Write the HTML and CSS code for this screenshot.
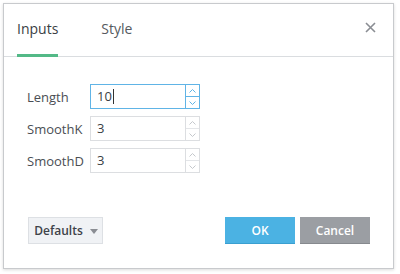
FILE: index.html
```html
<!DOCTYPE html>
<html lang="en">
<head>
    <meta charset="UTF-8">
    <title>Stoch - Inputs</title>
    <link rel="stylesheet" href="styles.css">
</head>
<body>
    <div class="dialog">
        <!-- tabs header -->
        <div class="dialog-header">
            <div class="tabs">
                <div class="tab active">Inputs</div>
                <div class="tab">Style</div>
            </div>
            <div class="close">
                <svg width="11" height="11" viewBox="0 0 11 11">
                    <path d="M1 1 L10 10 M10 1 L1 10" stroke="#8a8d93" stroke-width="1.6" fill="none"/>
                </svg>
            </div>
        </div>

        <!-- inputs -->
        <div class="dialog-body">
            <div class="row">
                <label class="row-label">Length</label>
                <div class="spin-input focused">
                    <div class="value">10<span class="caret"></span></div>
                    <div class="spinner">
                        <div class="spin-btn"><svg width="7" height="4" viewBox="0 0 7 4"><path d="M0.5 3.5 L3.5 0.5 L6.5 3.5" stroke="currentColor" fill="none"/></svg></div>
                        <div class="spin-btn"><svg width="7" height="4" viewBox="0 0 7 4"><path d="M0.5 0.5 L3.5 3.5 L6.5 0.5" stroke="currentColor" fill="none"/></svg></div>
                    </div>
                </div>
            </div>
            <div class="row">
                <label class="row-label">SmoothK</label>
                <div class="spin-input">
                    <div class="value">3</div>
                    <div class="spinner">
                        <div class="spin-btn"><svg width="7" height="4" viewBox="0 0 7 4"><path d="M0.5 3.5 L3.5 0.5 L6.5 3.5" stroke="currentColor" fill="none"/></svg></div>
                        <div class="spin-btn"><svg width="7" height="4" viewBox="0 0 7 4"><path d="M0.5 0.5 L3.5 3.5 L6.5 0.5" stroke="currentColor" fill="none"/></svg></div>
                    </div>
                </div>
            </div>
            <div class="row">
                <label class="row-label">SmoothD</label>
                <div class="spin-input">
                    <div class="value">3</div>
                    <div class="spinner">
                        <div class="spin-btn"><svg width="7" height="4" viewBox="0 0 7 4"><path d="M0.5 3.5 L3.5 0.5 L6.5 3.5" stroke="currentColor" fill="none"/></svg></div>
                        <div class="spin-btn"><svg width="7" height="4" viewBox="0 0 7 4"><path d="M0.5 0.5 L3.5 3.5 L6.5 0.5" stroke="currentColor" fill="none"/></svg></div>
                    </div>
                </div>
            </div>
        </div>

        <!-- footer buttons -->
        <div class="dialog-footer">
            <div class="btn btn-defaults">Defaults <span class="arrow"></span></div>
            <div class="actions">
                <div class="btn btn-ok">OK</div>
                <div class="btn btn-cancel">Cancel</div>
            </div>
        </div>
    </div>
</body>
</html>
```

FILE: styles.css
```css
body {
    margin: 0;
    padding: 3px 0 0 3px;
    font-family: 'Open Sans', 'Noto Sans', sans-serif;
    background: #fff;
    width: 400px;
    height: 274px;
    box-sizing: border-box;
    overflow: hidden;
}

.dialog {
    width: 391px;
    height: 266px;
    box-sizing: border-box;
    border: 1px solid #c8cacd;
    background: #fff;
    box-shadow: 0 1px 3px rgba(0, 0, 0, 0.15);
    display: flex;
    flex-direction: column;
}

/* header with tabs */
.dialog-header {
    height: 52px;
    border-bottom: 1px solid #dadde0;
    display: flex;
    justify-content: space-between;
    padding: 0 17px 0 13px;
}

.tabs {
    display: flex;
    gap: 43px;
}

.tab {
    font-size: 14px;
    color: #555a60;
    padding-top: 15px;
    border-bottom: 3px solid transparent;
    margin-bottom: -1px;
}

.tab.active {
    color: #3a3e44;
    border-bottom-color: #53b987;
}

.close {
    padding-top: 18px;
}

.close svg {
    display: block;
}

/* form rows */
.dialog-body {
    padding: 27px 0 0 23px;
    display: flex;
    flex-direction: column;
    gap: 7px;
    flex: 1;
}

.row {
    display: flex;
    align-items: center;
}

.row-label {
    width: 63px;
    font-size: 13px;
    color: #4a4e54;
}

.spin-input {
    width: 110px;
    height: 25px;
    box-sizing: border-box;
    border: 1px solid #dcdee1;
    display: flex;
}

.spin-input.focused {
    border-color: #60b4e6;
}

.value {
    flex: 1;
    font-size: 13px;
    color: #3a3e44;
    padding-left: 6px;
    line-height: 23px;
    display: flex;
    align-items: center;
}

.caret {
    width: 1px;
    height: 15px;
    background: #333;
    margin-left: 1px;
}

.spinner {
    width: 13px;
    border-left: 1px solid #dcdee1;
    display: flex;
    flex-direction: column;
}

.focused .spinner {
    border-left-color: #60b4e6;
}

.spin-btn {
    flex: 1;
    display: flex;
    align-items: center;
    justify-content: center;
    color: #c5c8cc;
}

.spin-btn + .spin-btn {
    border-top: 1px solid #e3e5e8;
}

.focused .spin-btn {
    color: #60b4e6;
}

.focused .spin-btn + .spin-btn {
    border-top-color: #60b4e6;
}

/* footer */
.dialog-footer {
    display: flex;
    justify-content: space-between;
    padding: 0 23px 24px 24px;
}

.actions {
    display: flex;
    gap: 5px;
}

.btn {
    height: 27px;
    box-sizing: border-box;
    font-size: 12px;
    font-weight: 600;
    display: flex;
    align-items: center;
    justify-content: center;
}

.btn-defaults {
    width: 75px;
    background: #f0f2f5;
    border: 1px solid #dde0e4;
    color: #3f4349;
    gap: 7px;
    padding-left: 1px;
}

.arrow {
    width: 0;
    height: 0;
    border-left: 4px solid transparent;
    border-right: 4px solid transparent;
    border-top: 5px solid #8a8d93;
    margin-top: 2px;
}

.btn-ok {
    width: 70px;
    background: #4bb2e3;
    border-bottom: 1px solid #3a9fd0;
    color: #fff;
}

.btn-cancel {
    width: 70px;
    background: #9b9ea3;
    border-bottom: 1px solid #86898e;
    color: #fff;
}
```
